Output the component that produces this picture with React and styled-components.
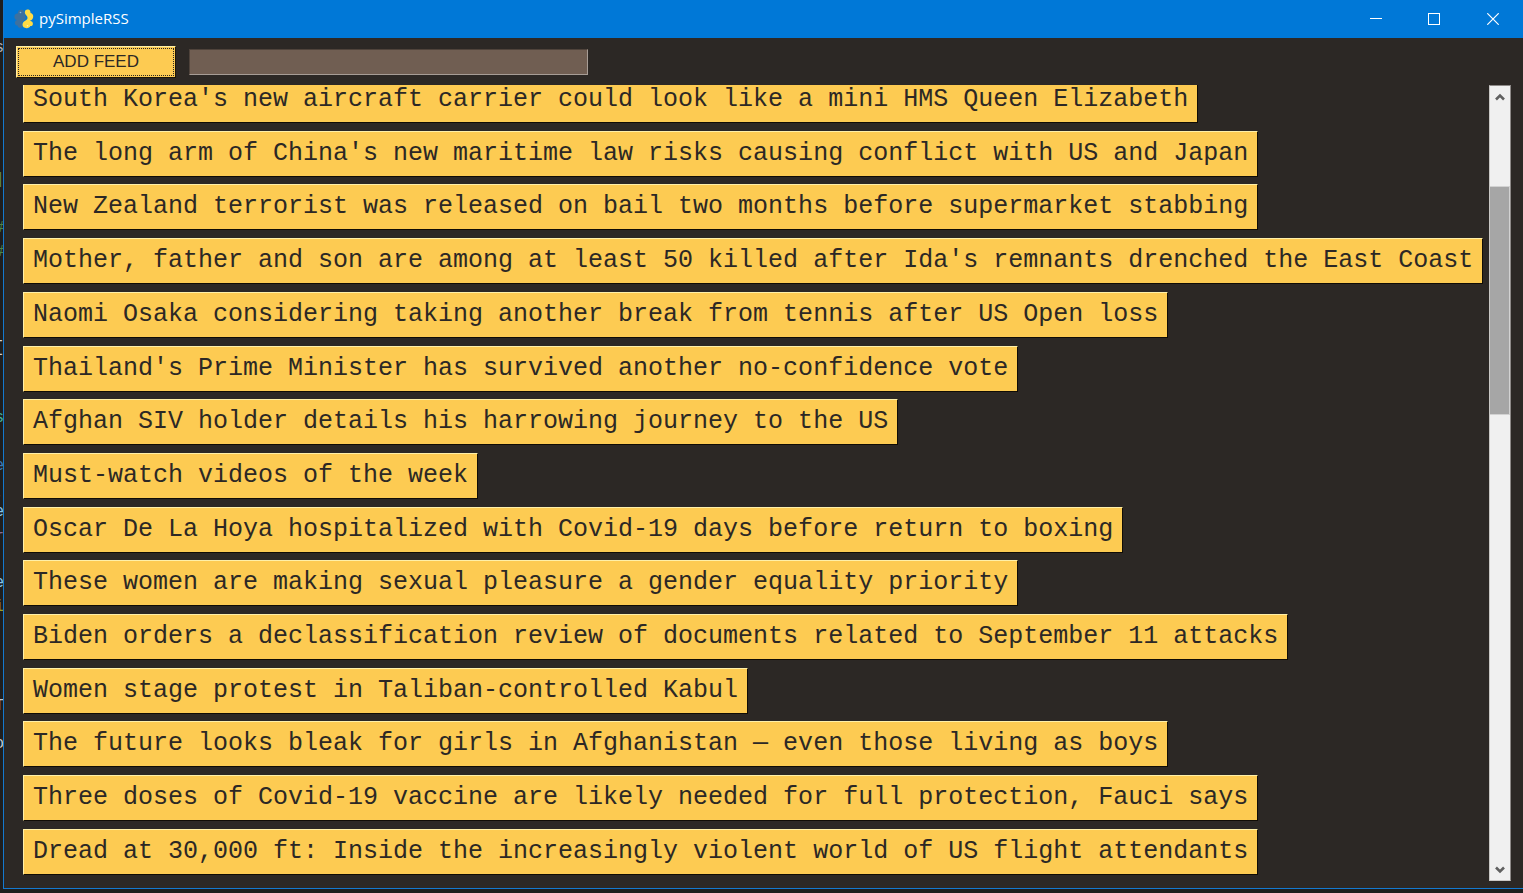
import React from "react";
import styled, { createGlobalStyle } from "styled-components";

const GlobalStyle = createGlobalStyle`
  * { box-sizing: border-box; }
  body { margin: 0; background: #1e1e1e; }
`;

const Desktop = styled.div`
  position: relative;
  display: flex;
  min-height: 100vh;
  padding: 0 0 4px 3px;
  background: #1e1e1e;
`;

const EditorEdge = styled.div`
  position: absolute;
  inset: 0 auto 0 0;
  width: 3px;
  overflow: hidden;
`;

const CodeGlyph = styled.span`
  position: absolute;
  right: -1px;
  top: ${(p) => p.$y}px;
  font: 16px/20px "Liberation Mono", monospace;
  color: ${(p) => p.$color};
`;

const Window = styled.main`
  flex: 1;
  min-width: 0;
  display: flex;
  flex-direction: column;
  border: solid #1479cf;
  border-width: 0 0 1px 1px;
  background: #2c2825;
`;

const TitleBar = styled.header`
  display: flex;
  align-items: center;
  height: 38px;
  padding-left: 10px;
  background: #0078d7;
  color: #fff;
`;

const Title = styled.h1`
  flex: 1;
  margin: 0 0 0 5px;
  padding-bottom: 2px;
  font: 400 15px/20px "Open Sans", "Noto Sans", sans-serif;
`;

const CaptionButton = styled.button`
  display: grid;
  place-items: center;
  width: ${(p) => p.$width || 58}px;
  height: 38px;
  padding: 0;
  border: 0;
  background: transparent;
  color: #fff;
`;

const Toolbar = styled.form`
  display: flex;
  align-items: center;
  gap: 13px;
  height: 47px;
  padding: 0 12px;
`;

const AddButton = styled.button`
  width: 160px;
  height: 32px;
  padding: 1px;
  border: 1px solid;
  border-color: #fff0a8 #1a1408 #1a1408 #fff0a8;
  background: #fdcb52;
  color: #2c2825;
  font: 17px/20px "Liberation Sans", Arial, sans-serif;
`;

const FocusRing = styled.span`
  display: block;
  height: 28px;
  border: 1px dotted #2c2825;
  line-height: 26px;
`;

const FeedInput = styled.input`
  width: 399px;
  height: 26px;
  padding: 0 4px;
  border: 1px solid;
  border-color: #4f433b #a79d96 #a79d96 #4f433b;
  background: #705e52;
  color: #fdcb52;
  font: 17px/20px "Liberation Sans", Arial, sans-serif;
  outline: 0;
`;

const Body = styled.div`
  flex: 1;
  display: flex;
  justify-content: space-between;
  padding: 0 12px 7px 19px;
`;

const Viewport = styled.section`
  flex: 1;
  min-width: 0;
  display: flex;
  overflow: hidden;
`;

const Headlines = styled.ul`
  display: flex;
  flex-direction: column;
  justify-content: space-between;
  margin: -8px 0 6px;
  padding: 0;
  list-style: none;
`;

const Item = styled.li`
  display: flex;
`;

const Headline = styled.button`
  height: 46px;
  padding: 0 9px;
  border: 1px solid;
  border-color: #fff0a8 #100c05 #100c05 #fff0a8;
  background: #fdcb52;
  color: #2c2825;
  font: 25px/32px "Liberation Mono", "Courier New", monospace;
  white-space: nowrap;
`;

const ScrollBar = styled.div`
  display: flex;
  flex-direction: column;
  width: 22px;
  border: 1px solid;
  border-color: #8d8987 #8d8987 #c9c7c5 #c9c7c5;
  background: #f0f0f0;
`;

const ScrollButton = styled.button`
  display: grid;
  place-items: center;
  height: 21px;
  padding: 0;
  border: 0;
  background: #f0f0f0;
  color: #606060;
`;

const Track = styled.div`
  flex: 1;
  display: flex;
  flex-direction: column;
`;

const Space = styled.div`
  flex: ${(p) => p.$grow} 0 0;
`;

const Thumb = styled.div`
  flex: 228 0 0;
  border: 1px solid #d2d2d2;
  border-width: 1px 1px 1px 0;
  background: #a6a6a6;
`;

const glyphs = [
  ["s", 38, "#b5b5b5"],
  ["]", 170, "#5c8a48"],
  ["#", 218, "#4d8545"],
  ["#", 242, "#4d8545"],
  ["[", 338, "#d4d4d4"],
  ["s", 408, "#42b598"],
  ["e", 456, "#3f79b5"],
  [",", 484, "#e0b890"],
  ["e", 502, "#86c5ea"],
  ["r", 527, "#8c6a95"],
  ["e", 573, "#86c5ea"],
  ["i", 597, "#9a9a20"],
  [",", 676, "#777777"],
  ["T", 696, "#c8c8c8"],
  ["o", 734, "#c8c8c8"],
];

const headlines = [
  "South Korea's new aircraft carrier could look like a mini HMS Queen Elizabeth",
  "The long arm of China's new maritime law risks causing conflict with US and Japan",
  "New Zealand terrorist was released on bail two months before supermarket stabbing",
  "Mother, father and son are among at least 50 killed after Ida's remnants drenched the East Coast",
  "Naomi Osaka considering taking another break from tennis after US Open loss",
  "Thailand's Prime Minister has survived another no-confidence vote",
  "Afghan SIV holder details his harrowing journey to the US",
  "Must-watch videos of the week",
  "Oscar De La Hoya hospitalized with Covid-19 days before return to boxing",
  "These women are making sexual pleasure a gender equality priority",
  "Biden orders a declassification review of documents related to September 11 attacks",
  "Women stage protest in Taliban-controlled Kabul",
  "The future looks bleak for girls in Afghanistan — even those living as boys",
  "Three doses of Covid-19 vaccine are likely needed for full protection, Fauci says",
  "Dread at 30,000 ft: Inside the increasingly violent world of US flight attendants",
];

function Logo() {
  return (
    <svg width="20" height="20" viewBox="0 0 20 20" aria-hidden="true">
      <path
        fill="#3d719f"
        d="M10.500 3C9.800 1 8.300.6 6.800.8C4.800 1 3.800 2.300 3.900 4.200C1.300 4.600.3 6 .4 8C.5 9.700 1.500 10.700 2.900 11.100C1 12 .5 13.700 1.200 15.200C1.800 16.300 2.800 16.500 3.600 16.400C3.700 18 4.900 19 6.600 18.800C8 18.700 8.700 17.800 8.800 16.600C7.500 14.700 8.300 12.700 10 11.600C11.200 10.800 11.800 9.500 11.500 7.800Z"
      />
      <circle cx="6.500" cy="3.500" r=".8" fill="#8fb5d4" />
      <path
        fill="#ffdc45"
        d="M10.800 3C11.200 1 12.500.4 14 .6C15.800.8 16.600 2.200 16.500 4C18.600 4.500 19.400 6 19.200 8C19 10 17.700 11.200 15.800 11.700C17.900 12 19 13.200 18.900 14.900C18.800 16.400 17.700 17.100 16.400 17.100C15.800 18.600 14.300 19.300 12.500 19.200C10 19.100 8.500 17.800 8.500 15.800C8.500 13.500 10 12.600 11.600 11.600C13.200 10.500 13.900 9.300 13.300 7.700C12.700 6.200 10.600 5.500 10.800 3Z"
      />
      <circle cx="13.500" cy="16.800" r=".8" fill="#fff3b0" />
    </svg>
  );
}

function Arrow({ down }) {
  return (
    <svg width="10" height="8" viewBox="0 0 10 8" aria-hidden="true">
      <path
        d={down ? "M1 1.500L5 5.500L9 1.500" : "M1 6.500L5 2.500L9 6.500"}
        fill="none"
        stroke="currentColor"
        strokeWidth="2.600"
      />
    </svg>
  );
}

export default function App() {
  return (
    <>
      <GlobalStyle />
      <Desktop>
        <EditorEdge aria-hidden="true">
          {glyphs.map(([char, y, color]) => (
            <CodeGlyph key={y} $y={y} $color={color}>
              {char}
            </CodeGlyph>
          ))}
        </EditorEdge>
        <Window>
          <TitleBar>
            <Logo />
            <Title>pySimpleRSS</Title>
            <CaptionButton aria-label="Minimize">
              <svg width="12" height="12" viewBox="0 0 12 12">
                <path d="M0 5.500H12" stroke="currentColor" />
              </svg>
            </CaptionButton>
            <CaptionButton aria-label="Maximize">
              <svg width="12" height="12" viewBox="0 0 12 12">
                <rect x=".5" y=".5" width="11" height="11" fill="none" stroke="currentColor" />
              </svg>
            </CaptionButton>
            <CaptionButton aria-label="Close" $width={60}>
              <svg width="12" height="12" viewBox="0 0 12 12">
                <path d="M.3 .3L11.700 11.700M11.700 .3L.3 11.700" stroke="currentColor" strokeWidth="1.200" />
              </svg>
            </CaptionButton>
          </TitleBar>
          <Toolbar onSubmit={(e) => e.preventDefault()}>
            <AddButton type="submit">
              <FocusRing>ADD FEED</FocusRing>
            </AddButton>
            <FeedInput type="text" aria-label="Feed address" />
          </Toolbar>
          <Body>
            <Viewport aria-label="Headlines">
              <Headlines>
                {headlines.map((text) => (
                  <Item key={text}>
                    <Headline type="button">{text}</Headline>
                  </Item>
                ))}
              </Headlines>
            </Viewport>
            <ScrollBar>
              <ScrollButton type="button" aria-label="Scroll up">
                <Arrow />
              </ScrollButton>
              <Track>
                <Space $grow={79} />
                <Thumb />
                <Space $grow={445} />
              </Track>
              <ScrollButton type="button" aria-label="Scroll down">
                <Arrow down />
              </ScrollButton>
            </ScrollBar>
          </Body>
        </Window>
      </Desktop>
    </>
  );
}
